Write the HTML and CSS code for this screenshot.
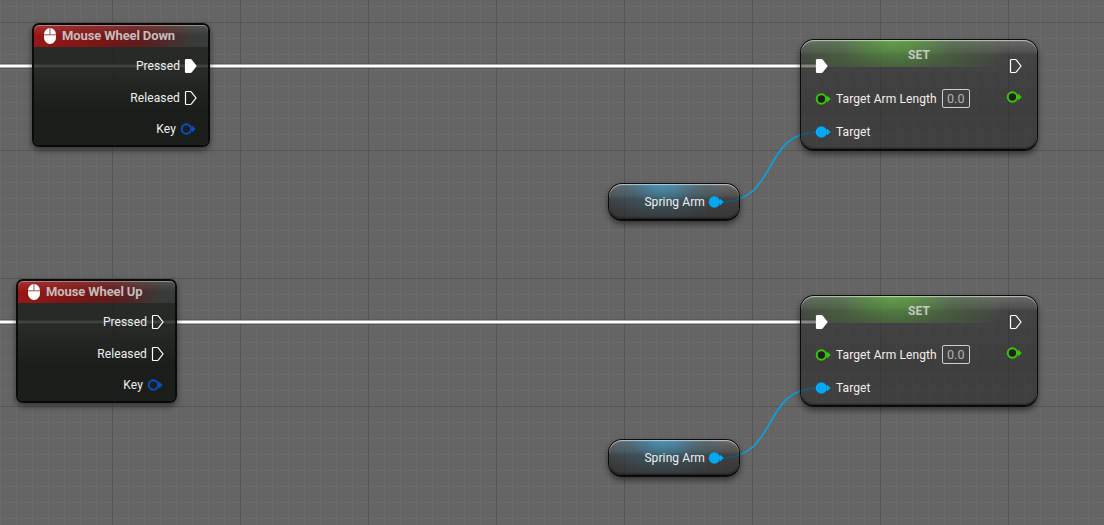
FILE: index.html
```
<!DOCTYPE html>
<html lang="en">
<head>
    <meta charset="UTF-8">
    <title>Event Graph</title>
    <link rel="stylesheet" href="styles.css">
</head>
<body>
    <svg class="defs" width="0" height="0">
        <symbol id="exec" viewBox="0 0 13 16">
            <path d="M1.5 2.6Q1.5 1.5 2.6 1.5H6.2Q6.9 1.5 7.4 2.1L12 8L7.4 13.9Q6.9 14.5 6.2 14.5H2.6Q1.5 14.5 1.5 13.4Z" stroke-width="1.2"/>
        </symbol>
        <symbol id="data" viewBox="0 0 16 12">
            <circle cx="6.4" cy="6" r="4.7" stroke-width="2"/>
            <path d="M12.5 3.3L15.2 6L12.5 8.7Z" fill="currentColor"/>
        </symbol>
        <symbol id="mouse" viewBox="0 0 12 16">
            <rect width="12" height="16" rx="6" ry="6.5" fill="#fff"/>
            <path d="M6 0V6.5M0 6.8H12" stroke="#a05050" stroke-width="1"/>
        </symbol>
    </svg>

    <div class="graph">
        <svg class="wires" width="1104" height="525">
            <g id="wire-set">
                <path class="wire-edge" d="M-5 66H818"/>
                <path class="wire-exec" d="M-5 66H818"/>
                <path class="wire-object" d="M721 202C779 202 761 132 818 132"/>
            </g>
            <use href="#wire-set" y="256"/>
        </svg>

        <div class="node event wheel-down">
            <div class="header">
                <svg class="mouse"><use href="#mouse"/></svg>
                <span>Mouse Wheel Down</span>
            </div>
            <div class="pins">
                <div class="pin"><span>Pressed</span><svg class="exec filled"><use href="#exec"/></svg></div>
                <div class="pin"><span>Released</span><svg class="exec"><use href="#exec"/></svg></div>
                <div class="pin key"><span>Key</span><svg class="data blue"><use href="#data"/></svg></div>
            </div>
        </div>

        <div class="node event wheel-up">
            <div class="header">
                <svg class="mouse"><use href="#mouse"/></svg>
                <span>Mouse Wheel Up</span>
            </div>
            <div class="pins">
                <div class="pin"><span>Pressed</span><svg class="exec"><use href="#exec"/></svg></div>
                <div class="pin"><span>Released</span><svg class="exec"><use href="#exec"/></svg></div>
                <div class="pin key"><span>Key</span><svg class="data blue"><use href="#data"/></svg></div>
            </div>
        </div>

        <div class="node set set-down">
            <div class="set-title">SET</div>
            <div class="set-body">
                <div class="inputs">
                    <div class="pin"><svg class="exec filled"><use href="#exec"/></svg></div>
                    <div class="pin"><svg class="data green"><use href="#data"/></svg><span>Target Arm Length</span><span class="value">0.0</span></div>
                    <div class="pin"><svg class="data cyan"><use href="#data"/></svg><span>Target</span></div>
                </div>
                <div class="outputs">
                    <div class="pin"><svg class="exec"><use href="#exec"/></svg></div>
                    <div class="pin"><svg class="data green"><use href="#data"/></svg></div>
                </div>
            </div>
        </div>

        <div class="node set set-up">
            <div class="set-title">SET</div>
            <div class="set-body">
                <div class="inputs">
                    <div class="pin"><svg class="exec filled"><use href="#exec"/></svg></div>
                    <div class="pin"><svg class="data green"><use href="#data"/></svg><span>Target Arm Length</span><span class="value">0.0</span></div>
                    <div class="pin"><svg class="data cyan"><use href="#data"/></svg><span>Target</span></div>
                </div>
                <div class="outputs">
                    <div class="pin"><svg class="exec"><use href="#exec"/></svg></div>
                    <div class="pin"><svg class="data green"><use href="#data"/></svg></div>
                </div>
            </div>
        </div>

        <div class="node variable arm-down">
            <span>Spring Arm</span><svg class="data cyan"><use href="#data"/></svg>
        </div>
        <div class="node variable arm-up">
            <span>Spring Arm</span><svg class="data cyan"><use href="#data"/></svg>
        </div>
    </div>
</body>
</html>
```

FILE: styles.css
```
body {
    margin: 0;
    font-family: Roboto, "Liberation Sans", sans-serif;
    font-size: 12px;
    letter-spacing: 0.1px;
    color: #f0f0f0;
}
.defs {
    position: absolute;
}
.graph {
    position: relative;
    height: 525px;
    overflow: hidden;
    background-color: #656565;
    /* dark lines every 128px, light ones every 16px */
    background-image:
        linear-gradient(to right, #555 1px, transparent 1px),
        linear-gradient(to bottom, #555 1px, transparent 1px),
        linear-gradient(to right, #6b6b6b 1px, transparent 1px),
        linear-gradient(to bottom, #6b6b6b 1px, transparent 1px);
    background-size: 128px 128px, 128px 128px, 16px 16px, 16px 16px;
    background-position: 112px 0, 0 22px, 0 0, 0 6px;
}
.wires {
    display: block;
    fill: none;
}
.wire-edge {
    stroke: #505050;
    stroke-width: 5;
}
.wire-exec {
    stroke: #fff;
    stroke-width: 3;
}
.wire-object {
    stroke: #00a8f3;
    stroke-width: 1.5;
}

/* nodes sit freely on the graph canvas */
.node {
    position: absolute;
    box-sizing: border-box;
    border: 2px solid #0a0a0a;
    box-shadow: 0 3px 6px rgba(0,0,0,0.5);
}
.wheel-down {
    left: 32px;
    top: 23px;
    width: 178px;
}
.wheel-up {
    left: 16px;
    top: 279px;
    width: 161px;
}
.set-down {
    left: 800px;
    top: 39px;
}
.set-up {
    left: 800px;
    top: 295px;
}
.arm-down {
    left: 608px;
    top: 183px;
}
.arm-up {
    left: 608px;
    top: 439px;
}

.pin {
    display: flex;
    align-items: center;
    white-space: nowrap;
}
.exec {
    width: 13px;
    height: 16px;
    fill: none;
    stroke: #fff;
}
.filled {
    fill: #fff;
}
.data {
    width: 16px;
    height: 12px;
    fill: #1b1e1b;
    stroke: currentColor;
}
.data path {
    stroke: none;
}
.blue {
    color: #0750c4;
}
.green {
    color: #38c800;
}
.cyan {
    color: #00a8f3;
    fill: #00a8f3;
}

.event {
    height: 124px;
    border-radius: 7px;
    background: linear-gradient(rgba(27,30,27,0.84), rgba(27,30,27,0.84) 40%, rgba(24,27,24,0.97) 70%);
    background-clip: padding-box;
}
.header {
    display: flex;
    align-items: center;
    gap: 6px;
    height: 22px;
    padding-left: 10px;
    border-radius: 5px 5px 0 0;
    background: linear-gradient(rgba(255,255,255,0.12), transparent 50%), linear-gradient(100deg, #9a1717, #7c1616 35%, #611a1a 60%, #383b39 92%);
    box-shadow: inset 0 1px 0 rgba(255,255,255,0.35);
    color: #c6bcbc;
    font-size: 13px;
    font-weight: bold;
}
.header span {
    line-height: 16px;
    letter-spacing: -0.12px;
    padding-bottom: 1px;
}
.mouse {
    width: 12px;
    height: 16px;
}
.pins {
    display: flex;
    flex-direction: column;
    align-items: flex-end;
    gap: 16px;
    padding: 11px 11px 0 0;
}
.pins .pin {
    height: 16px;
    gap: 4px;
}
.pins .key {
    margin-top: -1px;
    padding-right: 1px;
}

.set {
    width: 238px;
    height: 112px;
    border-width: 1px 1px 2px;
    border-radius: 14px;
    padding: 1px 1px 0;
    background:
        radial-gradient(ellipse 115px 60px at 40% 0, rgba(94,180,60,0.75), rgba(80,140,60,0.35) 50%, transparent) 0 0 / 100% 27px no-repeat,
        linear-gradient(rgba(160,160,160,0.4), rgba(120,120,120,0.2) 13px, transparent 14px),
        linear-gradient(rgba(42,42,42,0.55), rgba(30,30,30,0.55) 60%, rgba(40,40,40,0.6));
    background-clip: padding-box;
}
.set::before, .variable::before {
    content: "";
    position: absolute;
    inset: 0;
    border-radius: 13px;
    box-shadow: inset 0 1px 1px rgba(255,255,255,0.6), inset 0 -1px 2px rgba(0,0,0,0.5);
}
.set-title {
    height: 17px;
    padding-top: 6px;
    line-height: 16px;
    text-align: center;
    color: #c4cac2;
    font-weight: bold;
}
.set-body {
    display: flex;
    justify-content: space-between;
    margin-top: -8px;
    padding: 0 14px 0 13px;
}
.inputs {
    display: flex;
    flex-direction: column;
    gap: 14px;
}
.inputs .pin {
    height: 19px;
    gap: 5px;
}
.inputs .exec {
    margin-left: 0;
}
.outputs {
    display: flex;
    flex-direction: column;
    align-items: flex-end;
    gap: 14px;
    padding-top: 1px;
}
.outputs .pin {
    height: 16px;
    margin-top: 1px;
}
.value {
    box-sizing: border-box;
    width: 28px;
    height: 19px;
    border: 1px solid #d0d0d0;
    border-radius: 2px;
    line-height: 18px;
    text-align: center;
    font-size: 12.5px;
    color: #b4b4b4;
}

.variable {
    display: flex;
    align-items: center;
    justify-content: flex-end;
    gap: 3px;
    width: 132px;
    height: 38px;
    border-width: 1px 1px 2px;
    padding: 1px 15px 0 0;
    border-radius: 14px;
    background:
        radial-gradient(ellipse 66px 36px at 42% 0, rgba(60,160,210,0.75), rgba(50,120,150,0.3) 55%, transparent),
        linear-gradient(rgba(160,160,160,0.4), rgba(120,120,120,0.2) 13px, transparent 14px),
        linear-gradient(rgba(46,46,46,0.55), rgba(24,24,24,0.6));
    background-clip: padding-box;
}
```
